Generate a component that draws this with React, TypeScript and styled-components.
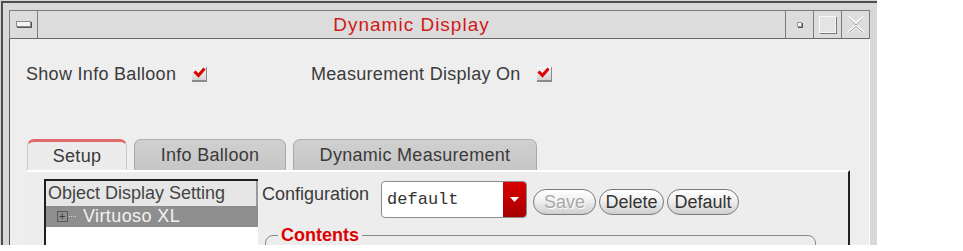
import React from "react";
import styled, { createGlobalStyle } from "styled-components";

const Global = createGlobalStyle`
  html, body { margin: 0; padding: 0; background: #ffffff; }
  body { font-family: "Liberation Sans", Arial, sans-serif; }
  * { box-sizing: border-box; }
`;

const Window = styled.div`
  width: 877px;
  height: 245px;
  padding: 1px 0 0 1px;
  background: #d5d5d5;
  overflow: hidden;
`;

const Frame = styled.div`
  height: 244px;
  display: flex;
  flex-direction: column;
  border-top: 2px solid #4e4e4e;
  border-left: 2px solid #4e4e4e;
  padding: 7px 7px 0 6px;
  background: #d8d8d8;
`;

const TitleBar = styled.div`
  height: 29px;
  flex: none;
  display: flex;
  border: 1px solid #7c7c7c;
  border-bottom-color: #6a6a6a;
  background: #dcdcdc;
`;

const TitleCell = styled.div<{ $left?: boolean }>`
  width: 28px;
  flex: none;
  display: flex;
  align-items: center;
  justify-content: center;
  ${(p) => (p.$left ? "border-right: 1px solid #7c7c7c;" : "border-left: 1px solid #7c7c7c;")}
`;

const Title = styled.div`
  flex: 1;
  display: flex;
  align-items: center;
  justify-content: center;
  color: #cf1a1a;
  font-size: 19px;
  letter-spacing: 1px;
`;

const Content = styled.div`
  flex: 1;
  display: flex;
  flex-direction: column;
  background: #eeeeee;
  border-left: 1px solid #555555;
  border-right: 1px solid #ffffff;
  padding: 25px 0 0 16px;
  overflow: hidden;
`;

const CheckRow = styled.div`
  display: flex;
  align-items: center;
  height: 20px;
`;

const CheckGroup = styled.label<{ $width?: number }>`
  display: flex;
  align-items: center;
  gap: 16px;
  ${(p) => (p.$width ? `width: ${p.$width}px;` : "")}
  font-size: 18px;
  letter-spacing: 0.3px;
  color: #3b3b3b;
  line-height: 20px;
`;

const CheckBox = styled.span`
  width: 15px;
  height: 15px;
  display: inline-flex;
  align-items: flex-start;
  justify-content: center;
  background: linear-gradient(#f6f6f6, #d4d4d4);
  border-right: 1px solid #8a8a8a;
  border-bottom: 2px solid #8a8a8a;
`;

const TabStrip = styled.div`
  display: flex;
  gap: 7px;
  margin: 55px 0 0 1px;
  height: 31px;
  flex: none;
`;

const Tab = styled.div<{ $active?: boolean; $w: number }>`
  width: ${(p) => p.$w}px;
  height: 31px;
  display: flex;
  align-items: center;
  justify-content: center;
  font-size: 18px;
  letter-spacing: 0.3px;
  color: #3a3a3a;
  border-radius: 7px 7px 0 0;
  border: 1px solid ${(p) => (p.$active ? "#c8c8c8" : "#a8a8a8")};
  border-bottom: none;
  border-top: ${(p) => (p.$active ? "3px solid #e06a6a" : "1px solid #b0b0b0")};
  background: ${(p) => (p.$active ? "#ececec" : "linear-gradient(#d0d0d0, #c6c6c6)")};
`;

const Panel = styled.div`
  flex: 1;
  width: 823px;
  margin-left: 1px;
  display: flex;
  align-items: flex-start;
  border-top: 2px solid #ffffff;
  border-right: 2px solid #222222;
  padding: 7px 0 0 17px;
  background: #ededed;
`;

const ListBox = styled.div`
  width: 214px;
  height: 80px;
  flex: none;
  background: #ffffff;
  border-top: 2px solid #1e1e1e;
  border-left: 2px solid #1e1e1e;
`;

const ListHeader = styled.div`
  height: 25px;
  display: flex;
  align-items: center;
  padding-left: 2px;
  background: #e6e6e6;
  border-right: 2px solid #9a9a9a;
  font-size: 18px;
  color: #444444;
  white-space: nowrap;
`;

const ListRow = styled.div<{ $selected?: boolean }>`
  height: 21px;
  display: flex;
  align-items: center;
  padding-left: 11px;
  background: ${(p) => (p.$selected ? "#8e8e8e" : "#ffffff")};
  color: ${(p) => (p.$selected ? "#f2f2f2" : "#333")};
  font-size: 18px;
  letter-spacing: 0.4px;
`;

const Expander = styled.span`
  width: 11px;
  height: 11px;
  border: 1px solid #5a5a5a;
  display: inline-flex;
  align-items: center;
  justify-content: center;
  color: #3a3a3a;
  font-size: 11px;
  line-height: 1;
  margin-right: 1px;
`;

const Dots = styled.span`
  width: 7px;
  border-top: 1px dotted #cfcfcf;
  margin-right: 7px;
`;

const RightCol = styled.div`
  margin-left: 4px;
  display: flex;
  flex-direction: column;
`;

const ConfigRow = styled.div`
  display: flex;
  align-items: flex-start;
`;

const ConfigLabel = styled.span`
  margin-top: 5px;
  font-size: 18px;
  line-height: 20px;
  color: #3a3a3a;
`;

const Combo = styled.div`
  margin: 2px 0 0 12px;
  width: 146px;
  height: 37px;
  display: flex;
  border: 1px solid #8c8c8c;
  border-radius: 4px;
  background: #ffffff;
  overflow: hidden;
`;

const ComboText = styled.span`
  flex: 1;
  display: flex;
  align-items: center;
  padding-left: 5px;
  font-family: "Liberation Mono", "Courier New", monospace;
  font-size: 17px;
  color: #333333;
`;

const ComboButton = styled.span`
  width: 23px;
  display: flex;
  align-items: center;
  justify-content: center;
  background: linear-gradient(#d80000, #a80000);
`;

const Buttons = styled.div`
  display: flex;
  gap: 3px;
  margin: 10px 0 0 6px;
`;

const PillButton = styled.button<{ $w: number; $disabled?: boolean }>`
  width: ${(p) => p.$w}px;
  height: 26px;
  padding: 0;
  border: 1px solid #7a7a7a;
  border-radius: 13px;
  background: linear-gradient(#ffffff 0%, #f0f0f0 45%, #cfcfcf 100%);
  font-family: "Liberation Sans", Arial, sans-serif;
  font-size: 18px;
  color: ${(p) => (p.$disabled ? "#a8a8a8" : "#333333")};
  text-shadow: ${(p) => (p.$disabled ? "1px 1px 0 #ffffff" : "none")};
  display: flex;
  align-items: center;
  justify-content: center;
`;

const Group = styled.fieldset`
  margin: 8px 0 0 3px;
  width: 551px;
  height: 40px;
  padding: 0 0 0 12px;
  border: 1px solid #8a8a8a;
  border-radius: 8px;
`;

const Legend = styled.legend`
  padding: 0 3px;
  font-size: 18px;
  font-weight: bold;
  color: #dd0000;
  line-height: 18px;
`;

const Check = () => (
  <svg width="13" height="11" viewBox="0 0 13 11">
    <path d="M1.5 4.5 L5.5 8.5 L11.5 1.5" fill="none" stroke="#dd0000" strokeWidth="3" />
  </svg>
);

export default function App() {
  return (
    <>
      <Global />
      <Window>
        <Frame>
          <TitleBar>
            <TitleCell $left>
              <svg width="16" height="7" viewBox="0 0 16 7">
                <rect x="0.5" y="0.5" width="14" height="5" fill="#f4f4f4" stroke="#8a8a8a" />
                <line x1="1" y1="6.5" x2="16" y2="6.5" stroke="#555" />
                <line x1="15.5" y1="1" x2="15.5" y2="7" stroke="#555" />
              </svg>
            </TitleCell>
            <Title>Dynamic Display</Title>
            <TitleCell>
              <svg width="6" height="6" viewBox="0 0 6 6">
                <rect x="0.5" y="0.5" width="4" height="4" fill="#f4f4f4" stroke="#999" />
                <line x1="1" y1="5.5" x2="6" y2="5.5" stroke="#555" />
                <line x1="5.5" y1="1" x2="5.5" y2="6" stroke="#555" />
              </svg>
            </TitleCell>
            <TitleCell>
              <svg width="18" height="18" viewBox="0 0 18 18">
                <rect x="0.5" y="0.5" width="16" height="16" fill="#e4e4e4" stroke="#f8f8f8" />
                <line x1="1" y1="17.5" x2="18" y2="17.5" stroke="#777" />
                <line x1="17.5" y1="1" x2="17.5" y2="18" stroke="#777" />
              </svg>
            </TitleCell>
            <TitleCell>
              <svg width="20" height="18" viewBox="0 0 20 18">
                <path d="M2 1 L10 8 L18 1 M2 17 L10 10 L18 17" fill="none" stroke="#f8f8f8" strokeWidth="3" />
                <path d="M2.5 2 L10 9 L17.5 2 M2.5 17 L10 10.5 L17.5 17" fill="none" stroke="#9a9a9a" strokeWidth="1" />
              </svg>
            </TitleCell>
          </TitleBar>
          <Content>
            <CheckRow>
              <CheckGroup $width={285}>
                Show Info Balloon
                <CheckBox>
                  <Check />
                </CheckBox>
              </CheckGroup>
              <CheckGroup>
                Measurement Display On
                <CheckBox>
                  <Check />
                </CheckBox>
              </CheckGroup>
            </CheckRow>
            <TabStrip>
              <Tab $active $w={100}>Setup</Tab>
              <Tab $w={152}>Info Balloon</Tab>
              <Tab $w={244}>Dynamic Measurement</Tab>
            </TabStrip>
            <Panel>
              <ListBox>
                <ListHeader>Object Display Setting</ListHeader>
                <ListRow $selected>
                  <Expander>+</Expander>
                  <Dots />
                  Virtuoso XL
                </ListRow>
              </ListBox>
              <RightCol>
                <ConfigRow>
                  <ConfigLabel>Configuration</ConfigLabel>
                  <Combo>
                    <ComboText>default</ComboText>
                    <ComboButton>
                      <svg width="9" height="5" viewBox="0 0 9 5">
                        <path d="M0 0 L9 0 L4.5 5 Z" fill="#ffffff" />
                      </svg>
                    </ComboButton>
                  </Combo>
                  <Buttons>
                    <PillButton $w={63} $disabled>Save</PillButton>
                    <PillButton $w={65}>Delete</PillButton>
                    <PillButton $w={72}>Default</PillButton>
                  </Buttons>
                </ConfigRow>
                <Group>
                  <Legend>Contents</Legend>
                </Group>
              </RightCol>
            </Panel>
          </Content>
        </Frame>
      </Window>
    </>
  );
}
